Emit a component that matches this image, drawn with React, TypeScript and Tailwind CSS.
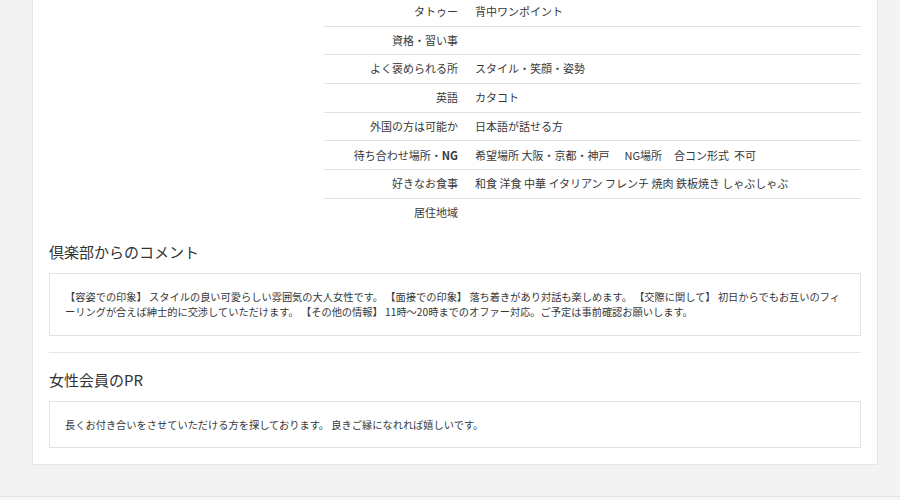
const font = { fontFamily: '"Noto Sans CJK JP", "Liberation Sans", sans-serif' }

const rows: { label: React.ReactNode; value: React.ReactNode }[] = [
  { label: 'タトゥー', value: '背中ワンポイント' },
  { label: '資格・習い事', value: '' },
  { label: 'よく褒められる所', value: 'スタイル・笑顔・姿勢' },
  { label: '英語', value: 'カタコト' },
  { label: '外国の方は可能か', value: '日本語が話せる方' },
  {
    label: (
      <>
        待ち合わせ場所・<span className="font-bold">NG</span>
      </>
    ),
    value: (
      <>
        希望場所 大阪・京都・神戸<span className="ml-[15px]">NG場所</span>
        <span className="ml-[12px]">合コン形式</span>
        <span className="ml-[5px]">不可</span>
      </>
    ),
  },
  {
    label: '好きなお食事',
    value: '和食 洋食 中華 イタリアン フレンチ 焼肉 鉄板焼き しゃぶしゃぶ',
  },
  { label: '居住地域', value: '' },
]

const ProfileTable = () => (
  <div className="flex">
    <div className="w-[275px] shrink-0" />
    <div className="flex-1">
      {rows.map((row, i) => (
        <div
          key={i}
          className={`flex h-[28.7px] items-center pb-[1px] text-[11px] text-[#383838] ${
            i < rows.length - 1 ? 'border-b border-[#e2e2e2]' : ''
          }`}
        >
          <div className="w-[142px] shrink-0 pr-[8px] text-right">{row.label}</div>
          <div className="pl-[9px]">{row.value}</div>
        </div>
      ))}
    </div>
  </div>
)

const Section = ({ title, children }: { title: string; children: React.ReactNode }) => (
  <div>
    <h2 className="text-[15px] leading-[22px] text-[#333]">{title}</h2>
    <div className="mt-[10px] border border-[#e3e3e3] bg-white px-[15px] text-[10.23px] leading-[15.6px] text-[#383838]">
      {children}
    </div>
  </div>
)

export default function App() {
  return (
    <div className="flex h-[500px] flex-col overflow-hidden bg-[#f3f3f3]" style={font}>
      <div className="mx-[32px] -mt-[3px] w-[846px] border border-[#e6e6e6] bg-white px-[16px] pb-[16px]">
        <ProfileTable />
        <div className="mt-[13px]">
          <Section title="倶楽部からのコメント">
            <p className="py-[15px]">
              【容姿での印象】 スタイルの良い可愛らしい雰囲気の大人女性です。 【面接での印象】 落ち着きがあり対話も楽しめます。 【交際に関して】 初日からでもお互いのフィーリングが合えば紳士的に交渉していただけます。 【その他の情報】 11時〜20時までのオファー対応。ご予定は事前確認お願いします。
            </p>
          </Section>
        </div>
        <div className="mt-[16px] border-t border-[#e6e6e6] pt-[16px]">
          <Section title="女性会員のPR">
            <p className="py-[15px]">
              長くお付き合いをさせていただける方を探しております。 良きご縁になれれば嬉しいです。
            </p>
          </Section>
        </div>
      </div>
      <div className="mt-auto h-[4px] border-t border-[#e2e2e2] bg-[#f6f6f6]" />
    </div>
  )
}
